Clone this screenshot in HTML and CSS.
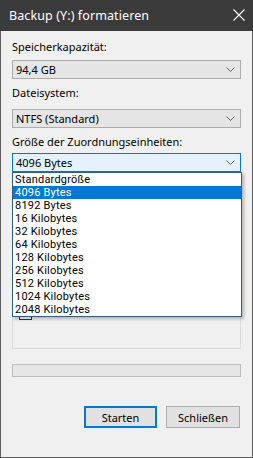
FILE: index.html
```html
<!DOCTYPE html>
<html lang="de">
<head>
    <meta charset="UTF-8">
    <meta name="viewport" content="width=device-width, initial-scale=1.0">
    <title>Backup (Y:) formatieren</title>
    <link rel="stylesheet" href="styles.css">
</head>
<body>
    <div class="window">
        <div class="titlebar">
            <span class="title">Backup (Y:) formatieren</span>
            <svg class="close" width="12" height="12" viewBox="0 0 12 12">
                <path d="M0.5 0.5 L11.5 11.5 M11.5 0.5 L0.5 11.5" stroke="#ffffff" stroke-width="1.1" fill="none"/>
            </svg>
        </div>

        <div class="content">
            <div class="label first">Speicherkapazität:</div>
            <div class="combo combo-size">
                <span>94,4 GB</span>
                <svg class="chevron" width="9" height="5" viewBox="0 0 9 5"><path d="M0.5 0.5 L4.5 4.5 L8.5 0.5" stroke="#606060" fill="none"/></svg>
            </div>

            <div class="label second">Dateisystem:</div>
            <div class="combo combo-fs">
                <span>NTFS (Standard)</span>
                <svg class="chevron" width="9" height="5" viewBox="0 0 9 5"><path d="M0.5 0.5 L4.5 4.5 L8.5 0.5" stroke="#606060" fill="none"/></svg>
            </div>

            <div class="label third">Größe der Zuordnungseinheiten:</div>
            <div class="dropdown">
                <div class="combo focused">
                    <span>4096 Bytes</span>
                    <svg class="chevron" width="9" height="5" viewBox="0 0 9 5"><path d="M0.5 0.5 L4.5 4.5 L8.5 0.5" stroke="#606060" fill="none"/></svg>
                </div>
                <ul class="list">
                    <li>Standardgröße</li>
                    <li class="selected">4096 Bytes</li>
                    <li>8192 Bytes</li>
                    <li>16 Kilobytes</li>
                    <li>32 Kilobytes</li>
                    <li>64 Kilobytes</li>
                    <li>128 Kilobytes</li>
                    <li>256 Kilobytes</li>
                    <li>512 Kilobytes</li>
                    <li>1024 Kilobytes</li>
                    <li>2048 Kilobytes</li>
                </ul>
            </div>

            <!-- options group, mostly covered by the open list -->
            <div class="group">
                <div class="check">
                    <span class="box"></span>
                </div>
            </div>

            <div class="progress"></div>

            <div class="buttons">
                <button class="btn default">Starten</button>
                <button class="btn">Schließen</button>
            </div>
        </div>
    </div>
</body>
</html>
```

FILE: styles.css
```css
* {
    margin: 0;
    padding: 0;
    box-sizing: border-box;
}

body {
    font-family: 'Noto Sans', 'DejaVu Sans', sans-serif;
    font-size: 11px;
    color: #000000;
    background: #f0f0f0;
}

.window {
    width: 253px;
    height: 458px;
    background: #f0f0f0;
    border: 1px solid #5c5c5c;
    border-top: none;
    display: flex;
    flex-direction: column;
}

.titlebar {
    height: 31px;
    margin: 0 -1px;
    background: #3b3b3b;
    display: flex;
    align-items: center;
    justify-content: space-between;
    padding: 0 8px 1px 9px;
    flex-shrink: 0;
}

.title {
    color: #ffffff;
    font-size: 12.5px;
    letter-spacing: 0.1px;
}

.content {
    padding: 0 11px;
    display: flex;
    flex-direction: column;
}

.label {
    height: 15px;
    line-height: 15px;
    white-space: nowrap;
}

.label.first { margin-top: 8px; }
.label.second { margin-top: 6px; }
.label.third { margin-top: 6px; }

.combo {
    height: 19px;
    background: #e5e5e5;
    border: 1px solid #adadad;
    display: flex;
    align-items: center;
    justify-content: space-between;
    padding: 0 5px 0 3px;
}

.combo-size { margin-top: 6px; }
.combo-fs { margin-top: 9px; }

.dropdown {
    position: relative;
    margin-top: 4px;
    z-index: 5;
}

.combo.focused {
    background: #e5f1fb;
    border-color: #0078d7;
}

.list {
    position: absolute;
    top: 100%;
    left: 0;
    width: 230px;
    list-style: none;
    background: #ffffff;
    border: 1px solid #2f5f8c;
    box-shadow: 2px 2px 3px rgba(0, 0, 0, 0.25);
}

.list li {
    height: 13px;
    line-height: 13px;
    padding-left: 2px;
    font-family: Roboto, 'Noto Sans', sans-serif;
    font-size: 11px;
    letter-spacing: 0.2px;
}

.list li.selected {
    background: #0078d7;
    color: #ffffff;
}

.group {
    margin-top: 107px;
    height: 70px;
    border: 1px solid #dcdcdc;
    padding: 0 6px;
}

.check {
    margin-top: 27px;
    display: flex;
}

.box {
    width: 13px;
    height: 13px;
    border: 1px solid #333333;
    background: #ffffff;
}

.progress {
    margin-top: 15px;
    height: 13px;
    background: #e6e6e6;
    border: 1px solid #bcbcbc;
}

.buttons {
    margin-top: 29px;
    display: flex;
    justify-content: flex-end;
    gap: 9px;
    padding-right: 1px;
}

.btn {
    height: 22px;
    width: 74px;
    font-family: inherit;
    font-size: 11px;
    color: #000000;
    background: #e1e1e1;
    border: 1px solid #adadad;
}

.btn.default {
    width: 73px;
    border: 2px solid #0078d7;
}
```
